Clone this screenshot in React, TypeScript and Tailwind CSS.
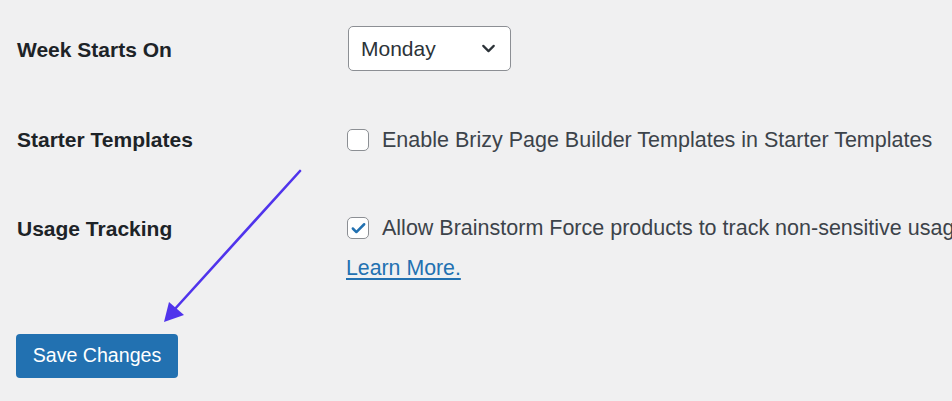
import { Check, ChevronDown } from 'lucide-react';

const Label = ({ children }: { children: React.ReactNode }) => (
  <div className="w-[330px] shrink-0 pl-px text-[21px] font-bold text-[#1d2327]">{children}</div>
);

const Checkbox = ({ checked = false }: { checked?: boolean }) => (
  <span className="flex h-[22px] w-[22px] shrink-0 items-center justify-center rounded-[5px] border border-[#8c8f94] bg-white">
    {checked && <Check className="h-[17px] w-[17px] text-[#2271b1]" strokeWidth={3.5} />}
  </span>
);

export default function App() {
  return (
    <div className="relative h-[401px] w-[952px] overflow-hidden bg-[#f0f0f1] font-['Liberation_Sans',Arial,sans-serif]">
      <div className="px-4 pt-[26px]">
        {/* Week starts on */}
        <div className="flex h-[45px] items-center">
          <Label>
            <span className="relative top-px">Week Starts On</span>
          </Label>
          <div className="ml-[2px] flex h-[45px] w-[163px] items-center justify-between rounded-[5px] border border-[#8c8f94] bg-white pl-[12px] pr-[11px] text-[21px] text-[#2c3338]">
            <span>Monday</span>
            <ChevronDown className="h-[21px] w-[21px] text-[#2c3338]" strokeWidth={2.5} />
          </div>
        </div>

        {/* Starter templates */}
        <div className="mt-[58px] flex h-[22px] items-center">
          <Label>Starter Templates</Label>
          <div className="ml-px flex items-center gap-[13px] text-[21.5px] text-[#3c434a]">
            <Checkbox />
            <span className="whitespace-nowrap">Enable Brizy Page Builder Templates in Starter Templates</span>
          </div>
        </div>

        {/* Usage tracking */}
        <div className="mt-[66px] flex">
          <div className="flex h-[22px] items-center">
            <Label>
              <span className="relative top-px">Usage Tracking</span>
            </Label>
          </div>
          <div className="ml-px flex min-w-0 flex-col">
            <div className="flex h-[22px] items-center gap-[13px] whitespace-nowrap text-[21.5px] text-[#3c434a]">
              <Checkbox checked />
              <span>Allow Brainstorm Force products to track non-sensitive usage tracking data.</span>
            </div>
            <a href="#" className="mt-[17px] -ml-px self-start text-[21.3px] leading-[24px] text-[#2271b1] underline underline-offset-[3px]">
              Learn More.
            </a>
          </div>
        </div>

        <button className="mt-[54px] flex h-[44px] w-[162px] items-center justify-center rounded-[4px] bg-[#2271b1] text-[19.6px] text-white">
          Save Changes
        </button>
      </div>

      {/* annotation arrow */}
      <svg className="pointer-events-none absolute left-0 top-0" width="952" height="401" viewBox="0 0 952 401">
        <line x1="300" y1="171" x2="174" y2="310" stroke="#5034ec" strokeWidth="2.6" strokeLinecap="round" />
        <polygon points="164,322 169,302 184,315" fill="#5034ec" />
      </svg>
    </div>
  );
}
